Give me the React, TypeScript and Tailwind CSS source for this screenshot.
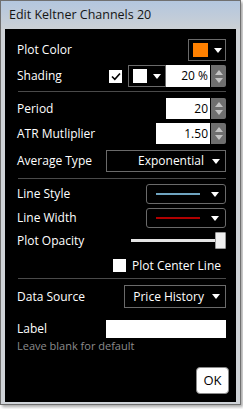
import React from 'react';

const font = { fontFamily: '"Open Sans", "Noto Sans", sans-serif' };

function Arrow({ color = '#ffffff' }: { color?: string }) {
  return (
    <svg width="8" height="5" viewBox="0 0 8 5" className="shrink-0">
      <path d="M0 0 H8 L4 5 Z" fill={color} />
    </svg>
  );
}

function Spinner() {
  return (
    <div className="ml-[1px] flex h-full w-[15px] flex-col items-center justify-center gap-[3px] rounded-r-[2px] bg-[#6f6f6f]">
      <svg width="8" height="5" viewBox="0 0 8 5">
        <path d="M0 5 H8 L4 0 Z" fill="#c4c4c4" />
      </svg>
      <svg width="8" height="5" viewBox="0 0 8 5">
        <path d="M0 0 H8 L4 5 Z" fill="#c4c4c4" />
      </svg>
    </div>
  );
}

function NumberBox({ value, width, height }: { value: string; width: string; height: string }) {
  return (
    <div className={`flex ${height}`}>
      <div className={`flex ${width} items-center justify-end bg-white pr-[2px] text-[12px] text-black`}>{value}</div>
      <Spinner />
    </div>
  );
}

function Row({ label, mt, h, children }: { label: string; mt: string; h: string; children: React.ReactNode }) {
  return (
    <div className={`flex ${mt} ${h} items-center justify-between`}>
      <span className="text-[12px] leading-none text-white">{label}</span>
      {children}
    </div>
  );
}

function Sep({ mt }: { mt: string }) {
  return <div className={`${mt} ml-[1px] h-px bg-[#4a4a4a]`} />;
}

export default function App() {
  return (
    <div className="h-[409px] w-[243px] bg-white" style={font}>
      <div className="flex h-[405px] w-[241px] flex-col border border-[#707070] shadow-[2px_2px_3px_rgba(0,0,0,0.35)]">
        <div className="flex h-[28px] items-center bg-gradient-to-b from-[#b3c6de] to-[#cbd0d5] pl-[8px] text-[12.5px] text-[#151515]">
          Edit Keltner Channels 20
        </div>
        <div className="flex flex-1 flex-col border-x-[4px] border-b-[2px] border-[#cfd3d8] bg-black pl-[12px] pr-[10px]">
          <Row label="Plot Color" mt="mt-[10px]" h="h-[22px]">
            <div className="flex h-full w-[38px] items-center gap-[6px] border border-[#6a6a6a] pl-[4px]">
              <div className="h-[14px] w-[15px] bg-[#ff8000]" />
              <Arrow />
            </div>
          </Row>

          <Row label="Shading" mt="mt-[4px]" h="h-[22px]">
            <div className="flex h-full items-center">
              <div className="mr-[6px] flex h-[13px] w-[13px] items-center justify-center bg-white">
                <svg width="10" height="9" viewBox="0 0 10 9">
                  <path d="M1 4.5 L3.8 7.3 L9 1.5" stroke="#000" strokeWidth="1.6" fill="none" />
                </svg>
              </div>
              <div className="flex h-full w-[38px] items-center gap-[6px] border border-[#6a6a6a] pl-[4px]">
                <div className="h-[14px] w-[14px] bg-white" />
                <Arrow />
              </div>
              <NumberBox value="20 %" width="w-[44px]" height="h-full" />
            </div>
          </Row>

          <Sep mt="mt-[4px]" />

          <Row label="Period" mt="mt-[6px]" h="h-[21px]">
            <NumberBox value="20" width="w-[44px]" height="h-full" />
          </Row>

          <Row label="ATR Mutliplier" mt="mt-[4px]" h="h-[21px]">
            <NumberBox value="1.50" width="w-[54px]" height="h-full" />
          </Row>

          <Row label="Average Type" mt="mt-[6px]" h="h-[22px]">
            <div className="flex h-full w-[120px] items-center justify-end gap-[8px] border border-[#6a6a6a] pr-[5px] text-[12px] text-white">
              Exponential
              <Arrow />
            </div>
          </Row>

          <Sep mt="mt-[6px]" />

          <Row label="Line Style" mt="mt-[5px]" h="h-[20px]">
            <div className="flex h-full w-[80px] items-center justify-between rounded-[3px] border border-[#6a6a6a] pl-[9px] pr-[6px]">
              <div className="h-[2px] w-[44px] bg-[#6fa4c0]" />
              <Arrow />
            </div>
          </Row>

          <Row label="Line Width" mt="mt-[4px]" h="h-[20px]">
            <div className="flex h-full w-[80px] items-center justify-between rounded-[3px] border border-[#6a6a6a] pl-[9px] pr-[6px]">
              <div className="h-[2px] w-[44px] bg-[#b00000]" />
              <Arrow />
            </div>
          </Row>

          <Row label="Plot Opacity" mt="mt-[4px]" h="h-[17px]">
            <div className="flex h-full w-[95px] items-center">
              <div className="h-[3px] flex-1 bg-[#e4e4e4]" />
              <div className="h-full w-[11px] rounded-[1px] border border-[#9a9a9a] bg-[#f0f0f0]" />
            </div>
          </Row>

          <div className="mt-[10px] flex h-[13px] items-center justify-end pr-[5px]">
            <div className="mr-[6px] h-[13px] w-[13px] bg-white" />
            <span className="text-[12px] leading-none text-white">Plot Center Line</span>
          </div>

          <Sep mt="mt-[6px]" />

          <Row label="Data Source" mt="mt-[6px]" h="h-[23px]">
            <div className="flex h-full w-[102px] items-center justify-end gap-[8px] border border-[#6a6a6a] pr-[5px] text-[12px] text-white">
              Price History
              <Arrow />
            </div>
          </Row>

          <Row label="Label" mt="mt-[12px]" h="h-[18px]">
            <div className="h-full w-[120px] bg-white" />
          </Row>

          <div className="mt-[1px] text-[11px] leading-[14px] text-[#8c8c8c]">Leave blank for default</div>

          <div className="mt-[14px] flex justify-end">
            <div className="-mr-[3px] flex h-[27px] w-[33px] items-center justify-center rounded-[4px] border border-[#8a8a8a] bg-white text-[13px] text-black">
              OK
            </div>
          </div>
        </div>
      </div>
    </div>
  );
}
